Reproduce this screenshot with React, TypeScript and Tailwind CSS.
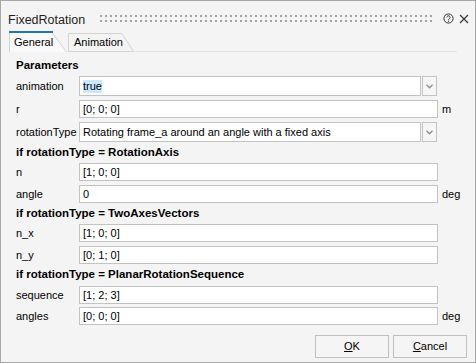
import React from 'react';

const Chevron = () => (
  <svg width="7" height="5" viewBox="0 0 7 5">
    <path d="M0.5 0.8 L3.5 3.8 L6.5 0.8" fill="none" stroke="#8c8c8c" strokeWidth="1.3" />
  </svg>
);

const Combo = ({ children }: { children: React.ReactNode }) => (
  <div className="flex h-[20px] w-[358px]">
    <div className="flex-1 flex items-center bg-white border border-[#c3c3c3] pl-[3px] whitespace-nowrap overflow-hidden">
      {children}
    </div>
    <div className="w-[15px] ml-[1px] flex items-center justify-center bg-[#f6f6f6] border border-[#c3c3c3]">
      <Chevron />
    </div>
  </div>
);

const TextBox = ({ value }: { value: string }) => (
  <div className="h-[18px] w-[359px] flex items-center bg-white border border-[#c3c3c3] pl-[3px] whitespace-nowrap">
    {value}
  </div>
);

const Row = ({
  label,
  unit,
  className = '',
  children,
}: {
  label: string;
  unit?: string;
  className?: string;
  children: React.ReactNode;
}) => (
  <div className={`flex items-center ${className}`}>
    <div className="w-[63px] whitespace-nowrap">{label}</div>
    {children}
    {unit && <span className="ml-[4px]">{unit}</span>}
  </div>
);

const Heading = ({ text, className }: { text: string; className: string }) => (
  <div className={`flex items-center font-bold text-[11.5px] whitespace-nowrap ${className}`}>{text}</div>
);

export default function App() {
  return (
    <div className="w-[476px] h-[363px] flex flex-col bg-[#f4f4f4] border border-[#a8a8a8] text-[11px] text-black font-['Liberation_Sans',Arial,sans-serif] overflow-hidden">
      {/* title bar */}
      <div className="h-[30px] flex items-start pt-[12px] pl-[7px]">
        <span className="text-[12.5px] leading-[15px] text-[#1e1e1e]">FixedRotation</span>
        <svg width="334" height="8" className="ml-[15px] mt-[2px]">
          <defs>
            <pattern id="grip" width="5" height="5" patternUnits="userSpaceOnUse">
              <rect width="2" height="2" fill="#a3a3a3" />
            </pattern>
          </defs>
          <rect width="334" height="7" fill="url(#grip)" />
        </svg>
        <svg width="11" height="11" viewBox="0 0 11 11" className="ml-[9px] mt-[0px]">
          <circle cx="5.5" cy="5.5" r="4.6" fill="none" stroke="#333" strokeWidth="1" />
          <path d="M3.9 4.4 a1.6 1.6 0 1 1 2.4 1.4 c-0.5 0.3 -0.8 0.5 -0.8 1.1 v0.3" fill="none" stroke="#333" strokeWidth="1" />
          <rect x="5" y="7.8" width="1" height="1" fill="#333" />
        </svg>
        <svg width="10" height="10" viewBox="0 0 10 10" className="ml-[5px] mt-[1px]">
          <path d="M1 1 L9 9 M9 1 L1 9" stroke="#333" strokeWidth="1.1" />
        </svg>
      </div>

      {/* tabs */}
      <div className="h-[21px] flex items-end pl-[8px]">
        <div className="relative w-[59px] h-[21px] flex items-center pl-[5px] pt-[1px]">
          <svg width="59" height="21" className="absolute left-0 top-0">
            <path d="M0 21 V1 H43 L57 21 Z" fill="#f9f9f9" />
            <path d="M0.5 21 V1 M43 1.5 L57.5 21" fill="none" stroke="#d3d3d3" strokeWidth="1" />
            <rect x="0" y="0" width="44" height="2" fill="#2176b0" />
          </svg>
          <span className="relative">General</span>
        </div>
        <div className="relative w-[66px] h-[19px] flex items-center pl-[6px]">
          <svg width="66" height="19" className="absolute left-0 top-0">
            <path d="M0.5 19 V0.5 H54 L65.5 18.5 H0.5" fill="none" stroke="#d3d3d3" strokeWidth="1" />
          </svg>
          <span className="relative">Animation</span>
        </div>
        <div className="w-[323px] h-[2px] border-b border-[#e3e3e3]" />
      </div>

      {/* parameters */}
      <div className="flex flex-col pl-[15px]">
        <Heading text="Parameters" className="mt-[4px] h-[20px]" />
        <Row label="animation">
          <Combo>
            <span className="bg-[#cce8ff] leading-[13px]">true</span>
          </Combo>
        </Row>
        <Row label="r" unit="m" className="mt-[4px]">
          <TextBox value="[0; 0; 0]" />
        </Row>
        <Row label="rotationType" className="mt-[4px]">
          <Combo>Rotating frame_a around an angle with a fixed axis</Combo>
        </Row>

        <Heading text="if rotationType = RotationAxis" className="h-[21px] pt-[1px]" />
        <Row label="n">
          <TextBox value="[1; 0; 0]" />
        </Row>
        <Row label="angle" unit="deg" className="mt-[4px]">
          <TextBox value="0" />
        </Row>

        <Heading text="if rotationType = TwoAxesVectors" className="h-[21px] pt-[1px]" />
        <Row label="n_x">
          <TextBox value="[1; 0; 0]" />
        </Row>
        <Row label="n_y" className="mt-[4px]">
          <TextBox value="[0; 1; 0]" />
        </Row>

        <Heading text="if rotationType = PlanarRotationSequence" className="h-[22px]" />
        <Row label="sequence">
          <TextBox value="[1; 2; 3]" />
        </Row>
        <Row label="angles" unit="deg" className="mt-[3px]">
          <TextBox value="[0; 0; 0]" />
        </Row>
      </div>

      {/* buttons */}
      <div className="mt-[10px] flex justify-end gap-[4px] pr-[8px]">
        <button className="w-[74px] h-[23px] bg-[#f5f5f5] border border-[#c0c0c0]">
          <span className="underline">O</span>K
        </button>
        <button className="w-[74px] h-[23px] bg-[#f5f5f5] border border-[#c0c0c0]">
          <span className="underline">C</span>ancel
        </button>
      </div>
    </div>
  );
}
